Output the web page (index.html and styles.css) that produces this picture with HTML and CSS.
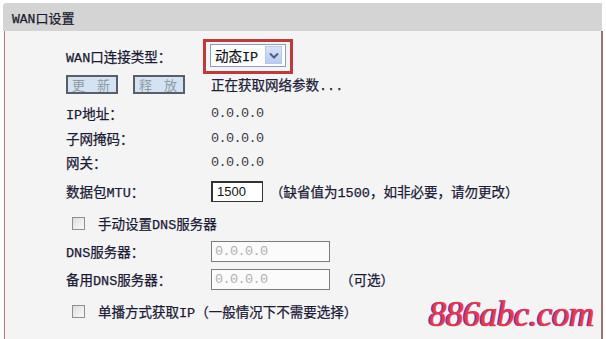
FILE: index.html
```html
<!DOCTYPE html>
<html lang="zh-CN">
<head>
<meta charset="utf-8">
<title>WAN口设置</title>
<link rel="stylesheet" href="styles.css">
</head>
<body>
<div class="page">
  <div class="header">WAN口设置</div>
  <div class="panel">
    <div class="row r1">
      <span class="label">WAN口连接类型：</span>
      <span class="mark">
        <span class="select"><span class="select-text">动态IP</span><span class="arrow"><svg width="10" height="7" viewBox="0 0 10 7"><path d="M1 1.5 L5 5.5 L9 1.5" fill="none" stroke="#4b5f86" stroke-width="2"/></svg></span></span>
      </span>
    </div>
    <div class="row r2">
      <span class="label buttons"><span class="btn">更 新</span><span class="btn">释 放</span></span>
      <span class="status">正在获取网络参数...</span>
    </div>
    <div class="row r3"><span class="label">IP地址：</span><span class="val">0.0.0.0</span></div>
    <div class="row r4"><span class="label">子网掩码：</span><span class="val">0.0.0.0</span></div>
    <div class="row r5"><span class="label">网关：</span><span class="val">0.0.0.0</span></div>
    <div class="row r6">
      <span class="label">数据包MTU：</span>
      <span class="input mtu">1500</span>
      <span class="hint">（缺省值为1500，如非必要，请勿更改）</span>
    </div>
    <div class="row r7 check-row"><span class="box"></span><span>手动设置DNS服务器</span></div>
    <div class="row r8"><span class="label">DNS服务器：</span><span class="input dns">0.0.0.0</span></div>
    <div class="row r9"><span class="label">备用DNS服务器：</span><span class="input dns">0.0.0.0</span><span class="hint opt">（可选）</span></div>
    <div class="row r10 check-row"><span class="box"></span><span>单播方式获取IP（一般情况下不需要选择）</span></div>
  </div>
  <div class="watermark">886abc.com</div>
</div>
</body>
</html>
```

FILE: styles.css
```css
html, body {
  margin: 0;
  padding: 0;
  background: #ffffff;
}
body {
  width: 606px;
  height: 339px;
  overflow: hidden;
  font-family: "Liberation Mono", "Noto Sans CJK TC", "Noto Sans CJK SC", monospace;
  font-size: 13.5px;
  color: #1a1a36;
  -webkit-text-stroke: 0.25px #1a1a36;
}
.page {
  position: relative;
  padding-top: 3px;
  margin-left: 3px;
  width: 599px;
}
.header {
  height: 28px;
  background: #d4d4d4;
  display: flex;
  align-items: center;
  padding-left: 9px;
  font-size: 13px;
  color: #1a1a2a;
  border-radius: 3px 0 0 0;
}
.panel {
  margin-left: 1px;
  height: 301px;
  background: #f4f4f4;
  border-left: 1px solid #b07a76;
  border-right: 2px solid #9a7272;
  border-bottom: 1px solid #c07a72;
  padding-top: 13px;
  padding-left: 61px;
  box-sizing: content-box;
  width: 535px;
}
.row {
  height: 24px;
  display: flex;
  align-items: center;
  white-space: nowrap;
}
.r2 { margin-top: 4px; }
.r3 { margin-top: 5px; }
.r4 { margin-top: 1px; }
.r5 { margin-top: 0; }
.r6 { margin-top: 5px; }
.r7 { margin-top: 8px; }
.r8 { margin-top: 4px; }
.r9 { margin-top: 4px; }
.r10 { margin-top: 8px; }
.label {
  width: 145px;
  flex: none;
}
.mark {
  margin-left: -8px;
  border: 3px solid #c03a3c;
  padding: 2px 4px 4px 4px;
  display: flex;
}
.select {
  width: 76px;
  height: 23px;
  box-sizing: border-box;
  border: 1px solid #8aa0bc;
  background: #ffffff;
  display: flex;
  align-items: center;
  justify-content: space-between;
  padding: 0 3px 0 4px;
}
.select-text {
  color: #111;
}
.arrow {
  width: 17px;
  height: 18px;
  background: linear-gradient(#d8e3fb, #b9cbf2);
  border: 1px solid #b8c8e6;
  box-sizing: border-box;
  display: flex;
  align-items: center;
  justify-content: center;
}
.buttons {
  display: flex;
  gap: 15px;
}
.btn {
  width: 52px;
  height: 19px;
  box-sizing: border-box;
  border: 2px solid #5a5e66;
  background: #d3e3f3;
  color: #8e9aa4;
  -webkit-text-stroke: 0;
  display: flex;
  align-items: center;
  justify-content: center;
  letter-spacing: 2px;
  font-size: 13px;
}
.status {
  color: #22223a;
}
.val {
  color: #3a3a4a;
  -webkit-text-stroke: 0;
  letter-spacing: -0.6px;
}
.input {
  box-sizing: border-box;
  display: flex;
  align-items: center;
  background: #ffffff;
  -webkit-text-stroke: 0;
}
.mtu {
  width: 52px;
  height: 21px;
  border: 1px solid #333;
  border-top-width: 2px;
  border-left-width: 2px;
  padding-left: 4px;
  font-family: "Liberation Sans", Arial, sans-serif;
  font-size: 13px;
  color: #111;
}
.hint {
  margin-left: 7px;
}
.opt {
  margin-left: 10px;
}
.dns {
  width: 119px;
  height: 21px;
  border: 1.5px solid #7c7c7c;
  background: #fbfbfb;
  padding-left: 3px;
  color: #b0b0b0;
  letter-spacing: -0.6px;
}
.check-row {
  padding-left: 6px;
}
.box {
  width: 13px;
  height: 13px;
  box-sizing: border-box;
  border: 1px solid #8a8f96;
  background: linear-gradient(135deg, #dcdcdc, #fbfbfb);
  margin-right: 13px;
  flex: none;
}
.watermark {
  position: absolute;
  right: 8px;
  top: 295px;
  font-family: "Liberation Serif", serif;
  font-style: italic;
  font-size: 35px;
  color: #e8384c;
  -webkit-text-stroke: 0.6px #e8384c;
  text-shadow: -1.5px 0 0 #5b3fd6;
  letter-spacing: -0.5px;
  line-height: 40px;
}
```
